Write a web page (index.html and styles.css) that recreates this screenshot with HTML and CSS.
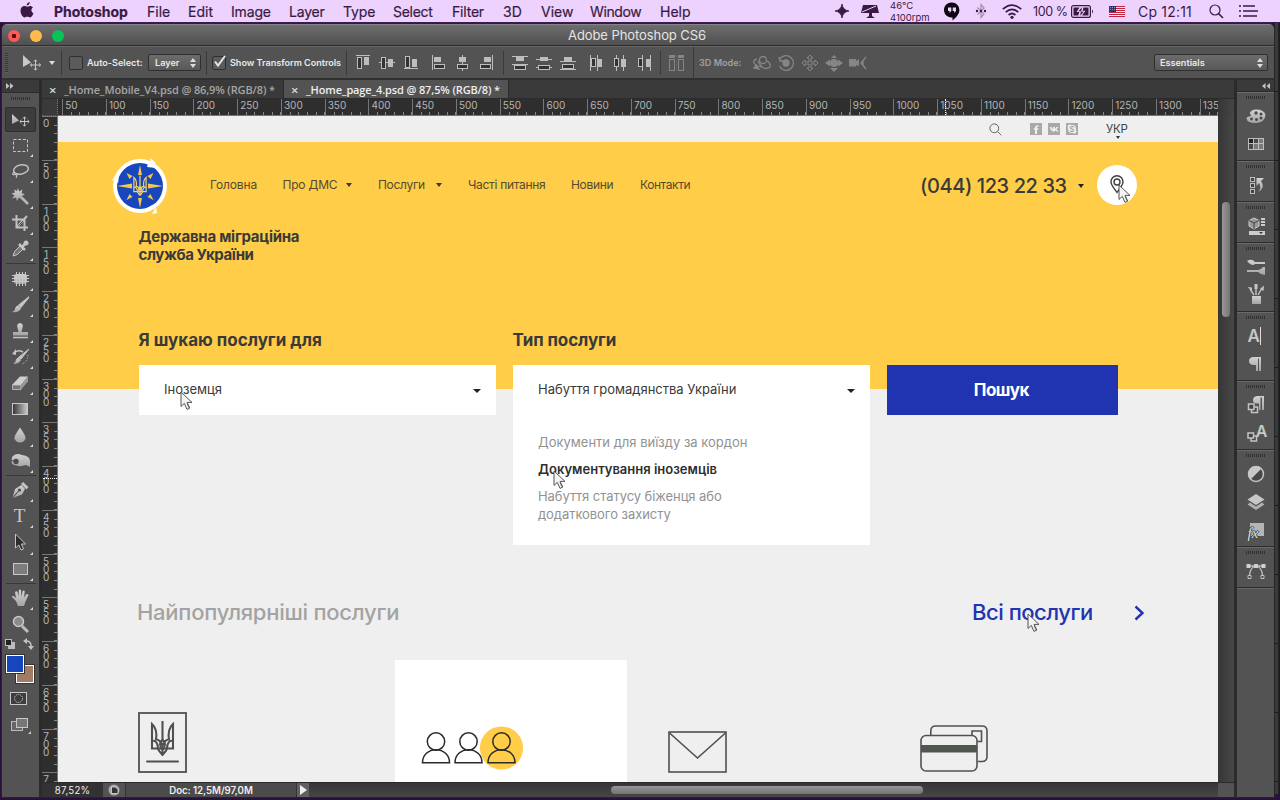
FILE: index.html
```html
<!DOCTYPE html>
<html lang="uk">
<head>
<meta charset="utf-8">
<title>Adobe Photoshop CS6</title>
<link rel="stylesheet" href="styles.css">
</head>
<body>
<svg class="defs" width="0" height="0">
  <defs>
    <linearGradient id="metal" x1="0" y1="0" x2="0" y2="1"><stop offset="0" stop-color="#d2d2d2"/><stop offset="1" stop-color="#a4a4a4"/></linearGradient>
    <linearGradient id="fade" x1="0" y1="0" x2="1" y2="0"><stop offset="0" stop-color="#333"/><stop offset="1" stop-color="#ccc"/></linearGradient>
    <symbol id="cursor" viewBox="0 0 13 20"><path d="M1 1V15.500L4.300 12.400L7 18.400L9.800 17.100L7.100 11.400H12Z" fill="#f4f4f4" stroke="#555" stroke-width="1"/><path d="M7 12.500L9.200 17" stroke="#555" stroke-width=".8"/></symbol>
    <symbol id="trident" viewBox="0 0 24 36"><g fill="none" stroke="currentColor" stroke-width="2.100"><path d="M12 1V21M1.500 4V28.500H22.500V4C18 8 17.500 13 18.500 19.500C14.500 19.500 13 23 12 26C11 23 9.500 19.500 5.500 19.500C6.500 13 6 8 1.500 4Z"/><path d="M1.500 21C5 20 7.500 23 7.500 28.500C8 31 10 32.500 12 35C14 32.500 16 31 16.500 28.500C16.500 23 19 20 22.500 21M12 20C8.500 22 9 26 12 30C15 26 15.500 22 12 20M12 28V34"/></g></symbol>
    <symbol id="person" viewBox="0 0 30 33"><g fill="none" stroke="#2b2b2b" stroke-width="1.500"><circle cx="15" cy="10" r="8.700"/><path d="M1.500 31.200C1.500 23.500 7.500 18.200 15 18.200S28.500 23.500 28.500 31.200Z"/></g></symbol>
  </defs>
</svg>

<header class="menubar">
  <svg class="apple" width="14" height="18" viewBox="0 0 14 18"><path d="M9.800 1C9.900 2.900 8.300 4.600 6.700 4.600C6.500 2.800 8.100 1.200 9.800 1ZM7.100 5.700C7.800 5.700 8.700 4.900 10 4.900C11.200 4.900 12.400 5.600 13 6.500C10.700 7.800 11 11.200 13.500 12.200C12.800 14.200 11.500 16.400 10.100 16.400C9 16.400 8.600 15.700 7.300 15.700C5.900 15.700 5.500 16.400 4.500 16.400C2.700 16.400.500 12.800.500 9.800C.500 6.800 2.400 5 4.300 5C5.500 5 6.400 5.700 7.100 5.700Z" fill="#3a1a45"/></svg>
  <nav class="menus">
    <b class="m-app">Photoshop</b><span class="m-file">File</span><span class="m-edit">Edit</span><span class="m-image">Image</span><span class="m-layer">Layer</span><span class="m-type">Type</span><span class="m-select">Select</span><span class="m-filter">Filter</span><span class="m-3d">3D</span><span class="m-view">View</span><span class="m-window">Window</span><span class="m-help">Help</span>
  </nav>
  <svg class="tray-spark" width="14" height="14" viewBox="0 0 14 14"><path d="M7 0Q7.800 6.200 14 7Q7.800 7.800 7 14Q6.200 7.800 0 7Q6.200 6.200 7 0Z" fill="#3a1a45" stroke="#3a1a45" stroke-width=".8"/></svg>
  <svg class="tray-lamp" width="18" height="15" viewBox="0 0 18 15"><path d="M2 1H16L18 9H11V12L14 14H5L8 12V9H0Z" fill="#3a1a45"/><path d="M1 8L15 2" stroke="#edd2fd" stroke-width="1"/></svg>
  <div class="sensors"><span>46°C</span><span>4100rpm</span></div>
  <svg class="tray-chat" width="16" height="19" viewBox="0 0 16 19"><path d="M8 .500A7.400 7.400 0 0 1 15.400 8C15.400 12 12 15.500 8.500 18.500V15.400A7.500 7.500 0 1 1 8 .500Z" fill="#0c0610"/><path d="M4 5.500H7.300V9L5.500 11V9H4ZM8.700 5.500H12V9L10.200 11V9H8.700Z" fill="#edd2fd"/></svg>
  <svg class="tray-bt" width="12" height="16" viewBox="0 0 12 16"><path d="M2.500 4.500L9 11L6 14.500V1.500L9 5L2.500 11.500" fill="none" stroke="#a68bb3" stroke-width="1.200"/><g fill="#3a1a45"><circle cx="2" cy="8" r="1.200"/><circle cx="6" cy="8" r="1.200"/><circle cx="10" cy="8" r="1.200"/></g></svg>
  <svg class="tray-wifi" width="20" height="15" viewBox="0 0 20 15"><g fill="none" stroke="#3a1a45" stroke-width="1.700"><path d="M.800 5.200Q10-3 19.200 5.200M3.700 8.200Q10 2.600 16.300 8.200M6.600 11Q10 8 13.400 11"/></g><circle cx="10" cy="13.300" r="1.600" fill="#3a1a45"/></svg>
  <span class="tray-pct">100 %</span>
  <svg class="tray-batt" width="23" height="13" viewBox="0 0 23 13"><rect x=".600" y=".600" width="18.800" height="11.800" rx="2" fill="none" stroke="#3a1a45" stroke-width="1.200"/><path d="M2.500 2.500H8.500L5.500 7H8.300L7.300 10.500H2.500ZM17.500 10.500H11L14.500 5.800H11.500L12.500 2.500H17.500Z" fill="#3a1a45"/><path d="M11.300 1.500L7 6.400H9.700L8.700 11.500L13.200 6.600H10.500Z" fill="#3a1a45" stroke="#edd2fd" stroke-width=".5"/><path d="M21 4.500Q23 6.500 21 8.500Z" fill="#3a1a45"/></svg>
  <svg class="tray-flag" width="16" height="11" viewBox="0 0 16 11"><rect width="16" height="11" fill="#f3e9f2"/><path d="M0 .500H16M0 2.500H16M0 4.500H16M0 6.500H16M0 8.500H16M0 10.500H16" stroke="#c0253f"/><rect width="7" height="6" fill="#34336f"/><path d="M1 1.500H7M1 3.500H7" stroke="#aaa6cc" stroke-width=".8" stroke-dasharray="1 1"/></svg>
  <span class="tray-clock">Ср 12:11</span>
  <svg class="tray-search" width="15" height="15" viewBox="0 0 15 15"><circle cx="6" cy="6" r="5" fill="none" stroke="#3a1a45" stroke-width="1.200"/><path d="M9.600 9.600L14 14" stroke="#3a1a45" stroke-width="1.500"/></svg>
  <svg class="tray-list" width="19" height="12" viewBox="0 0 19 12"><path d="M0 1H2M4 1H16M0 6H2M4 6H19M0 11H2M4 11H18" stroke="#3a1a45" stroke-width="1.700"/></svg>
</header>

<div class="desktop">
<div class="window">
  <div class="titlebar">
    <i class="light red"></i><i class="light amber"></i><i class="light green"></i>
    <h1>Adobe Photoshop CS6</h1>
  </div>

  <div class="options">
    <i class="vgrip"></i>
    <svg class="o-move" width="19" height="16" viewBox="0 0 19 16"><path d="M1 0V12L9 7.500Z" fill="#c8c8c8"/><path d="M13.500 5V15M8.500 10H18.500M12 6.500L13.500 4.800L15 6.500M12 13.500L13.500 15.200L15 13.500M10 8.500L8.300 10L10 11.500M17 8.500L18.700 10L17 11.500" stroke="#c8c8c8" fill="none"/></svg>
    <i class="caret-light"></i>
    <i class="osep s1"></i>
    <i class="check"></i><span class="t-auto">Auto-Select:</span>
    <span class="select sel-layer">Layer<svg width="6" height="10" viewBox="0 0 6 10"><path d="M3 0L6 4H0ZM0 6H6L3 10Z" fill="#ddd"/></svg></span>
    <i class="osep s2"></i>
    <span class="check on"><svg width="15" height="14" viewBox="0 0 15 14"><path d="M3 6.500L6 10.500L13 1" fill="none" stroke="#e6e6e6" stroke-width="2"/></svg></span><span class="t-show">Show Transform Controls</span>
    <i class="osep s3"></i>
    <svg class="align" width="340" height="24" viewBox="350 50 340 24" shape-rendering="crispEdges">
      <g fill="#bdbdbd">
        <rect x="356" y="54" width="14" height="1"/><rect x="364" y="56" width="5" height="8"/>
        <rect x="379" y="61" width="16" height="1"/><rect x="388" y="58" width="5" height="8"/>
        <rect x="404" y="67" width="14" height="1"/><rect x="412" y="58" width="5" height="8"/>
        <rect x="432" y="54" width="1" height="15"/><rect x="434" y="56" width="7" height="5"/>
        <rect x="462" y="54" width="1" height="16"/><rect x="459" y="56" width="7" height="5"/>
        <rect x="492" y="54" width="1" height="15"/><rect x="484" y="56" width="7" height="5"/>
        <rect x="512" y="55" width="16" height="1"/><rect x="512" y="63" width="16" height="1"/><rect x="516" y="56" width="8" height="4"/>
        <rect x="536" y="58" width="16" height="1"/><rect x="536" y="66" width="16" height="1"/><rect x="540" y="56" width="8" height="4"/>
        <rect x="560" y="60" width="16" height="1"/><rect x="560" y="68" width="16" height="1"/><rect x="564" y="56" width="8" height="4"/>
        <rect x="590" y="54" width="1" height="16"/><rect x="597" y="54" width="1" height="16"/><rect x="598" y="58" width="4" height="8"/>
        <rect x="616" y="54" width="1" height="16"/><rect x="623" y="54" width="1" height="16"/><rect x="621" y="58" width="5" height="8"/>
        <rect x="642" y="54" width="1" height="16"/><rect x="650" y="54" width="1" height="16"/><rect x="646" y="58" width="4" height="8"/>
      </g>
      <g fill="#333" stroke="#bdbdbd">
        <rect x="357.500" y="56.500" width="4" height="11"/><rect x="381.500" y="56.500" width="4" height="11"/><rect x="405.500" y="55.500" width="4" height="11"/>
        <rect x="434.500" y="63.500" width="10" height="4"/><rect x="457.500" y="63.500" width="10" height="4"/><rect x="480.500" y="63.500" width="10" height="4"/>
        <rect x="514.500" y="64.500" width="11" height="4"/><rect x="538.500" y="64.500" width="11" height="4"/><rect x="562.500" y="63.500" width="11" height="4"/>
        <rect x="591.500" y="57.500" width="4" height="8"/><rect x="614.500" y="57.500" width="4" height="8"/><rect x="638.500" y="57.500" width="4" height="8"/>
      </g>
      <path d="M503.500 50V74M660.500 50V74" stroke="#3a3a3a"/>
      <g fill="#555" stroke="#858585"><rect x="669.500" y="58.500" width="5" height="11"/><rect x="678.500" y="58.500" width="5" height="11"/></g>
      <path d="M669 55.500H675M678 55.500H684" stroke="#858585" stroke-width="3"/><path d="M676.500 54V70" stroke="#666" stroke-dasharray="2 1"/>
    </svg>
    <i class="osep s4"></i>
    <span class="t-3d">3D Mode:</span>
    <svg class="modes" width="116" height="20" viewBox="752 52 116 20">
      <g fill="none" stroke="#868686" stroke-width="1.300">
        <circle cx="763" cy="59" r="3.500"/><path d="M757 58Q753 59 754 62Q756 65 762 66M767 60Q771 62 770 66Q766 69 762 66L759 62Q757 60 760 60"/><path d="M756 64L759 68L754 67Z" fill="#868686"/>
        <circle cx="786" cy="62" r="3" fill="#868686"/><path d="M780 58A7.300 7.300 0 1 1 779.500 65M779 56L780 60H784"/>
        <path d="M809 61V57H807L810 54L813 57H811V61H815V59L818 62L815 65V63H811V67H813L810 70L807 67H809V63H805V65L802 62L805 59V61Z" stroke-width="1"/>
      </g>
      <g fill="#868686"><circle cx="834" cy="62" r="4"/><path d="M834 54L837 57H831ZM834 71L830 67H838ZM825 62L830 58.500V65.500ZM843 62L838 58.500V65.500Z"/><rect x="849" y="58" width="7" height="7.500"/><path d="M856 60L859 58V65L856 64Z"/></g>
      <path d="M866 56L861 62L866 68M863 60V64" fill="none" stroke="#868686" stroke-width="1.300"/>
    </svg>
    <span class="select sel-ess">Essentials<svg width="6" height="10" viewBox="0 0 6 10"><path d="M3 0L6 4H0ZM0 6H6L3 10Z" fill="#ddd"/></svg></span>
  </div>

  <div class="work">
    <aside class="tools">
      <div class="collapse"><svg width="8" height="6" viewBox="0 0 8 6"><path d="M0 0L3.500 3L0 6ZM4 0L7.500 3L4 6Z" fill="#c4c4c4"/></svg></div>
      <i class="grip"></i>
      <div class="tool active"><svg width="24" height="24" viewBox="0 0 24 24"><path d="M4 6V16L11 12.500Z" fill="url(#metal)"/><path d="M16.500 9V18M12 13.500H21M15 10.500L16.500 8.800L18 10.500M15 16.500L16.500 18.200L18 16.500M13.500 12L11.800 13.500L13.500 15M19.500 12L21.200 13.500L19.500 15" stroke="#c4c4c4" fill="none"/></svg></div>
      <div class="tool more"><svg width="24" height="24" viewBox="0 0 24 24"><rect x="5.500" y="6.500" width="14" height="12" fill="none" stroke="#c8c8c8" stroke-dasharray="3 1.700"/></svg></div>
      <div class="tool more"><svg width="24" height="24" viewBox="0 0 24 24"><ellipse cx="13" cy="10.500" rx="7.500" ry="4.500" transform="rotate(-12 13 10.500)" fill="none" stroke="#c0c0c0" stroke-width="1.500"/><path d="M6 13Q3 16 6.500 15.500T8 19" fill="none" stroke="#c0c0c0" stroke-width="1.300"/></svg></div>
      <div class="tool more"><svg width="24" height="24" viewBox="0 0 24 24"><path d="M13 12L20 19" stroke="#b8b8b8" stroke-width="2.500"/><path d="M10 3L11 6.500L14.500 4.500L13.500 8L17 9.500L13.500 11L14 14.500L11 12.500L9 16L8 12.500L4 13.500L6.500 10.500L3.500 8.500L7 7.500L6 4.500L9 6Z" fill="url(#metal)"/></svg></div>
      <div class="tool more"><svg width="24" height="24" viewBox="0 0 24 24"><path d="M4 8.500H16.500V20M8.500 4V16.500H20M9 16L19 5" fill="none" stroke="#c0c0c0" stroke-width="2"/><path d="M10 15L15 10" stroke="#555" stroke-width="1"/></svg></div>
      <div class="tool more"><svg width="24" height="24" viewBox="0 0 24 24"><path d="M5 19L6.500 14.500L12 9L15 12L9.500 17.500Z" fill="#777" stroke="#c4c4c4"/><path d="M11 7L17 13M14 10L18.500 5.500" stroke="#c4c4c4" stroke-width="2.500"/><circle cx="18" cy="6" r="2.500" fill="#c4c4c4"/></svg></div>
      <i class="rule"></i>
      <div class="tool more"><svg width="24" height="24" viewBox="0 0 24 24"><rect x="6" y="7" width="13" height="10" rx="3" fill="url(#metal)"/><path d="M8.500 5V19M11.500 5V19M14.500 5V19M17.500 5V19M4 8.500H21M4 11.500H21M4 14.500H21" stroke="#c8c8c8" stroke-width="1"/></svg></div>
      <div class="tool more"><svg width="24" height="24" viewBox="0 0 24 24"><path d="M21 4L13 14L11 12Z" fill="#c4c4c4" stroke="#c4c4c4" stroke-width="1.300"/><path d="M10.500 12.500L13 15Q12 20 3.500 19Q7 18 7 15.500Q8 12.500 10.500 12.500Z" fill="url(#metal)"/></svg></div>
      <div class="tool more"><svg width="24" height="24" viewBox="0 0 24 24"><path d="M12 4A3 3 0 0 1 14.500 8.500L13.500 13H20V16.500H5V13H10.500L9.500 8.500A3 3 0 0 1 12 4Z" fill="url(#metal)"/><path d="M5 18.500H20" stroke="#c4c4c4" stroke-width="1.500"/></svg></div>
      <div class="tool more"><svg width="24" height="24" viewBox="0 0 24 24"><path d="M21 4L13 14L11 12Z" fill="#c4c4c4" stroke="#c4c4c4"/><path d="M10.500 12L13 15Q11 19 5 19Q8 17 8 14.500Z" fill="url(#metal)"/><path d="M6 8Q10 4 15 7" fill="none" stroke="#c4c4c4" stroke-width="1.500"/><path d="M4 9L8 4V10Z" fill="#c4c4c4"/><path d="M20 10Q20 17 14 19" fill="none" stroke="#c4c4c4" stroke-dasharray="1 1.500"/></svg></div>
      <div class="tool more"><svg width="24" height="24" viewBox="0 0 24 24"><path d="M4 14L12 5.500H20L13 14Z" fill="#cfcfcf"/><path d="M4.500 14H13V18.500H4.500Z" fill="#777" stroke="#c4c4c4" stroke-width=".8"/><path d="M13 14L20 5.500V10.500L13 18.500Z" fill="#999"/></svg></div>
      <div class="tool more"><svg width="24" height="24" viewBox="0 0 24 24"><rect x="4.500" y="6.500" width="15" height="11" fill="url(#fade)" stroke="#c8c8c8"/></svg></div>
      <div class="tool more"><svg width="24" height="24" viewBox="0 0 24 24"><path d="M12 4.500Q18 13 17.500 15.500Q16 19.500 12 19.500T6.500 15.500Q6 13 12 4.500Z" fill="url(#metal)"/></svg></div>
      <div class="tool more"><svg width="24" height="24" viewBox="0 0 24 24"><path d="M4 8Q8 3 14 6Q22 7 22 12V18L18 16Q12 18 9 16.500Q3 16 3.500 12Z" fill="url(#metal)"/><circle cx="8" cy="12.500" r="2.700" fill="#4a4a4a"/><path d="M8 12.500L3 11.500" stroke="#4a4a4a"/></svg></div>
      <i class="rule"></i>
      <div class="tool more"><svg width="24" height="24" viewBox="0 0 24 24"><path d="M4.500 20L7 11L13.500 7L17 11L14 16.500Z" fill="url(#metal)"/><path d="M13 6L15 4L20.500 9L18.500 11.500Z" fill="#c4c4c4"/><path d="M5 19.500L11 12.500" stroke="#444"/><circle cx="11.500" cy="12" r="1.500" fill="#444"/></svg></div>
      <div class="tool more type-tool">T</div>
      <div class="tool more"><svg width="24" height="24" viewBox="0 0 24 24"><path d="M7.500 4V18L10.800 15L13 20L15.500 19L13.300 14H17.500Z" fill="#2c2c2c" stroke="#c4c4c4"/></svg></div>
      <div class="tool more"><svg width="24" height="24" viewBox="0 0 24 24"><rect x="5.500" y="6.500" width="14" height="11" fill="#7d7d7d" stroke="#c8c8c8"/></svg></div>
      <i class="rule"></i>
      <div class="tool more"><svg width="24" height="24" viewBox="0 0 24 24"><path d="M8 15L3.500 10.500Q5 9 8 12L7 6Q8.500 4.500 9.500 6L10.500 10.500L10.800 4Q12 3 13 4L13.200 10.500L14.500 5Q16 4 16.800 5.500L16 11.500L18.500 8Q20 7.500 20.500 9L17.500 15.500L16 20H10Z" fill="url(#metal)"/></svg></div>
      <div class="tool"><svg width="24" height="24" viewBox="0 0 24 24"><path d="M14 14L20 20" stroke="#bdbdbd" stroke-width="3"/><circle cx="10.500" cy="9.500" r="5" fill="#8b8b8b" stroke="#c8c8c8" stroke-width="1.500"/></svg></div>
      <svg class="mini" width="32" height="14" viewBox="0 0 32 14"><rect x="4" y="5" width="7" height="7" fill="#bbb"/><rect x="1.500" y="2.500" width="6" height="6" fill="#222" stroke="#bbb"/><path d="M22 4Q27 4 27 9" fill="none" stroke="#c4c4c4" stroke-width="1.500"/><path d="M19 4L23 1V7ZM24 9H30L27 13Z" fill="#c4c4c4"/></svg>
      <div class="swatches"><i class="bgc"></i><i class="fgc"></i></div>
      <svg class="mask" width="18" height="14" viewBox="0 0 18 14"><rect x=".500" y=".500" width="16" height="12" fill="#3d3d3d" stroke="#c8c8c8"/><circle cx="8.500" cy="6.500" r="4" fill="none" stroke="#ddd" stroke-dasharray="1 1"/></svg>
      <svg class="screen" width="22" height="18" viewBox="0 0 22 18"><rect x="1.500" y="4.500" width="11" height="9" fill="#666" stroke="#bbb"/><rect x="6.500" y="1.500" width="11" height="9" fill="#777" stroke="#c8c8c8"/><path d="M21 14V17H18Z" fill="#ccc"/></svg>
    </aside>

    <section class="document">
      <div class="tabs">
        <div class="tab"><i class="x">×</i><span>_Home_Mobile_V4.psd @ 86,9% (RGB/8) *</span></div>
        <div class="tab current"><i class="x">×</i><span>_Home_page_4.psd @ 87,5% (RGB/8) *</span></div>
      </div>
      <div class="corner"></div>
      <div class="hruler" id="hruler"><i class="hmark"></i></div>
      <div class="vtop"></div>
      <div class="vruler" id="vruler"><i class="vmark"></i></div>

      <main class="canvas">
        <div class="topline">
          <svg class="p-search" width="13" height="13" viewBox="0 0 13 13"><circle cx="5.300" cy="5.300" r="4.400" fill="none" stroke="#666"/><path d="M8.500 8.500L12.300 12.200" stroke="#666"/></svg>
          <div class="social">
            <svg width="12" height="12" viewBox="0 0 12 12"><rect width="12" height="12" fill="#a9a9a9"/><path d="M5 11V6.800H3.800V5.200H5V4Q5.200 1.800 8.500 2.200V3.800Q7 3.600 7 4.500V5.200H8.500L8.300 6.800H7V11Z" fill="#efefef"/></svg>
            <svg width="12" height="12" viewBox="0 0 12 12"><rect width="12" height="12" fill="#a9a9a9"/><path d="M1.500 4H3.300L5 6.500V4H6.800V6L8.500 4H10.500L8.500 6.200L10.700 8.600H8.600L7 7V8.600H5.500Q3 8 1.500 4Z" fill="#efefef"/></svg>
            <svg width="12" height="12" viewBox="0 0 12 12"><rect width="12" height="12" fill="#a9a9a9"/><circle cx="6" cy="6" r="4" fill="#efefef"/><circle cx="3.800" cy="3.800" r="2.200" fill="#efefef"/><circle cx="8.200" cy="8.200" r="2.200" fill="#efefef"/><path d="M8 4.500Q7.500 3.500 6 3.500T4.200 4.700Q4.200 5.700 6 6T7.900 7.300Q7.600 8.500 6 8.500T4 7.500" stroke="#8c8c8c" fill="none" stroke-width="1"/></svg>
          </div>
          <div class="lang">УКР<i></i></div>
        </div>

        <div class="hero">
          <div class="head">
            <svg class="logo" width="60" height="60" viewBox="0 0 60 60">
              <circle cx="30" cy="30" r="27" fill="#fff"/><path d="M2 24L8 16V26ZM40 2L46 7L42 10ZM42 58L46 51L47 57Z" fill="#fff"/><circle cx="30" cy="30" r="23" fill="#1746bd"/><path d="M38 7L46 12L37 11ZM6 23L9 19L8 28ZM37 52L44 48L40 54Z" fill="#fff"/>
              <g fill="#f3c74f"><path d="M30 9L32 19H28ZM30 52L32 42H28ZM7 30L22 27.500V32.500ZM53 30L38 27.500V32.500ZM16.500 17L22.500 20L19.500 23ZM43.500 17L37.500 20L40.500 23ZM16.500 44L22.500 41L19.500 38ZM43.500 44L37.500 41L40.500 38Z"/></g>
              <svg x="23" y="19" width="14" height="21" class="gold"><use href="#trident"/></svg>
            </svg>
            <nav class="site-nav"><a class="n1">Головна</a><a class="n2 has">Про ДМС</a><a class="n3 has">Послуги</a><a class="n4">Часті питання</a><a class="n5">Новини</a><a class="n6">Контакти</a></nav>
            <div class="phone">(044) 123 22 33<i class="tri"></i></div>
            <div class="pin"><svg width="14" height="19" viewBox="0 0 14 19"><path d="M7 17.500C4.500 13.500 1 10.500 1 6.800A6 6 0 0 1 13 6.800C13 10.500 9.500 13.500 7 17.500Z" fill="none" stroke="#3f3f3f" stroke-width="1.400"/><circle cx="7" cy="7" r="3" fill="none" stroke="#3f3f3f" stroke-width="1.400"/></svg><svg class="cur c-pin" width="13" height="20"><use href="#cursor"/></svg></div>
          </div>
          <div class="brand"><span class="b1">Державна міграційна</span><span class="b2">служба України</span></div>

          <form class="search">
            <label class="l1">Я шукаю послуги для</label><label class="l2">Тип послуги</label><span></span>
            <div class="box first"><div class="value">Іноземця<i class="tri"></i></div><svg class="cur c-first" width="13" height="20"><use href="#cursor"/></svg></div>
            <div class="box drop">
              <div class="value"><span class="v2">Набуття громадянства України</span><i class="tri"></i></div>
              <ul>
                <li>Документи для виїзду за кордон</li>
                <li class="hover">Документування іноземців</li>
                <li class="multi">Набуття статусу біженця або<br>додаткового захисту</li>
              </ul>
              <svg class="cur c-drop" width="13" height="20"><use href="#cursor"/></svg>
            </div>
            <div class="button">Пошук</div>
          </form>
        </div>

        <div class="popular">
          <h2>Найпопулярніші послуги</h2>
          <div class="all"><span>Всі послуги</span><svg class="chev" width="11" height="16" viewBox="0 0 11 16"><path d="M1.500 1.500L8.500 8L1.500 14.500" fill="none" stroke="#2233b0" stroke-width="2.400"/></svg><svg class="cur c-all" width="13" height="20"><use href="#cursor"/></svg></div>
        </div>

        <div class="cards">
          <div class="card k1"><svg width="49" height="61" viewBox="0 0 49 61"><rect x="1" y="1" width="47" height="59" fill="none" stroke="#505050" stroke-width="1.800"/><svg x="12" y="8" width="25" height="36" class="dark"><use href="#trident"/></svg><path d="M9 49.500H40" stroke="#505050" stroke-width="2" stroke-linecap="round"/></svg></div>
          <div class="card k2"><svg width="103" height="44" viewBox="0 0 103 44"><circle cx="80.500" cy="22" r="21.600" fill="#ffcd48"/><svg x="0" y="5.500" width="30" height="33"><use href="#person"/></svg><svg x="32.500" y="5.500" width="30" height="33"><use href="#person"/></svg><svg x="65.500" y="5.500" width="30" height="33"><use href="#person"/></svg></svg></div>
          <div class="card k3"><svg width="59" height="42" viewBox="0 0 59 42"><rect x="1" y="1" width="57" height="40" fill="none" stroke="#505050" stroke-width="1.600"/><path d="M1 1.500L29.500 27L58 1.500" fill="none" stroke="#505050" stroke-width="1.600"/></svg></div>
          <div class="card k4"><svg width="68" height="47" viewBox="0 0 68 47"><g fill="none" stroke="#505250" stroke-width="1.600"><path d="M10.800 10V5.800Q10.800 1 15.600 1H62Q67 1 67 5.800V31.500Q67 36.500 62 36.500H57.500M52 10.500V6H61.500V16.500H57.500"/><rect x="1" y="10.500" width="56" height="35.500" rx="5"/></g><rect x="1" y="20" width="56" height="7.500" fill="#505650"/></svg></div>
        </div>
      </main>

      <div class="vscroll"><i></i></div>
      <div class="status">
        <span class="zoom">87,52%</span>
        <span class="sbtn"><svg width="12" height="12" viewBox="0 0 12 12"><circle cx="6" cy="6" r="5.500" fill="#a8a8a8"/><path d="M3.500 3H7.500L10 5.500V9.500H3.500Z" fill="#333" stroke="#ddd" stroke-width=".8"/></svg></span>
        <span class="doc">Doc: 12,5M/97,0M</span>
        <span class="sarrow"><svg width="7" height="10" viewBox="0 0 7 10"><path d="M0 0L7 5L0 10Z" fill="#eee"/></svg></span>
        <span class="hscroll"><i></i></span>
        <span class="resize"></span>
      </div>
    </section>

    <aside class="panels">
      <div class="collapse"><svg width="8" height="6" viewBox="0 0 8 6"><path d="M3.500 0L0 3L3.500 6ZM8 0L4.500 3L8 6Z" fill="#c4c4c4"/></svg></div>
      <div class="group"><i class="grip"></i>
        <svg width="24" height="28" viewBox="0 0 24 28"><path d="M11 7.500Q20 7 21.500 13Q21 20 12 21Q3 21 2.500 16.500Q3 14 6 14.500Q8 13 6 12Q5 9 11 7.500Z" fill="url(#metal)"/><g fill="#4b4b4b"><circle cx="12" cy="11" r="1.700"/><circle cx="17" cy="12" r="1.500"/><circle cx="17" cy="16" r="1.500"/><circle cx="12.500" cy="17.500" r="1.500"/><circle cx="7.500" cy="17" r="1.400"/></g></svg>
        <svg width="24" height="28" viewBox="0 0 24 28"><rect x="4" y="8" width="16" height="12" fill="#bdbdbd"/><path d="M5 9H9V13H5Z" fill="#222"/><path d="M10 9H14V13H10ZM5 14H9V19H5Z" fill="#4a4a4a"/><path d="M15 9H19V13H15ZM10 14H14V19H10ZM15 14H19V19H15Z" fill="#7a7a7a"/></svg>
      </div>
      <div class="group"><i class="grip"></i>
        <svg width="24" height="28" viewBox="0 0 24 28"><g fill="#444" stroke="#bdbdbd"><rect x="6.500" y="6.500" width="4" height="4"/><rect x="6.500" y="12.500" width="4" height="4"/><rect x="6.500" y="18.500" width="4" height="4"/></g><path d="M14 21Q22 17 17 10L20 7H12.500V15L15 12Q18 17 14 21Z" fill="url(#metal)"/></svg>
      </div>
      <div class="group"><i class="grip"></i>
        <svg width="24" height="28" viewBox="0 0 24 28"><path d="M10 6L15 8.500V14L10 17L5 14V8.500Z" fill="#999" stroke="#ccc"/><path d="M5 8.500L10 11L15 8.500M10 11V17" stroke="#444" fill="none"/><path d="M17 7H21M17 10H21M17 13H21" stroke="#ccc" stroke-width="2"/><rect x="5" y="19" width="16" height="4" fill="#ccc"/><path d="M15 20H19L17 22Z" fill="#333"/></svg>
      </div>
      <div class="group"><i class="grip"></i>
        <svg width="24" height="28" viewBox="0 0 24 28"><path d="M3 8Q8 5 11 9H21V11H11Q8 14 3 8ZM21 14V22Q17 22 14 19H3V17H14Q17 17 19 14Z" fill="url(#metal)"/></svg>
        <svg width="24" height="28" viewBox="0 0 24 28"><path d="M8 15H17V23H8Z" fill="url(#metal)"/><path d="M10 14L6 8M12 14V6M14 14L18 7" stroke="#bdbdbd" stroke-width="1.500"/><path d="M3.500 6L8 6.500L8 10ZM10.500 3H13.500V8H10.500ZM16 8L20 4.500L19.500 10Z" fill="#c4c4c4"/></svg>
      </div>
      <div class="group"><i class="grip"></i>
        <div class="glyph letter">A<i></i></div>
        <svg width="24" height="28" viewBox="0 0 24 28"><path d="M17 7H9Q5 7.500 5 11T9 15H12V21H14V8.500H15V21H17Z" fill="url(#metal)"/></svg>
      </div>
      <div class="group"><i class="grip"></i>
        <svg width="24" height="28" viewBox="0 0 24 28"><path d="M20 5H13Q9 5.500 9 9T13 12.500H15V19H16.500V6.500H18V19H20Z" fill="url(#metal)"/><g fill="#444" stroke="#c4c4c4" stroke-width="1.500"><rect x="7.500" y="16" width="6" height="5.500"/><rect x="4.500" y="13" width="5.500" height="5.500"/></g></svg>
        <div class="glyph styled">A<svg width="11" height="10" viewBox="0 0 11 10"><g fill="#444" stroke="#c4c4c4" stroke-width="1.500"><rect x="4" y="4" width="5.500" height="5"/><rect x="1" y="1" width="5.500" height="5"/></g></svg></div>
      </div>
      <div class="group"><i class="grip"></i>
        <svg width="24" height="28" viewBox="0 0 24 28"><circle cx="12" cy="14" r="7.500" fill="#484848" stroke="#c4c4c4" stroke-width="1.500"/><path d="M17.500 8.500A7.700 7.700 0 0 0 6.500 19.500Z" fill="#c8c8c8"/></svg>
        <svg width="24" height="28" viewBox="0 0 24 28"><path d="M12 6L20.500 11.500L12 17L3.500 11.500Z" fill="#c8c8c8"/><path d="M6 14.500L12 18.500L18 14.500L20.500 16.500L12 22L3.500 16.500Z" fill="#b0b0b0"/></svg>
        <div class="glyph fx"><i></i><em>fx</em></div>
      </div>
      <div class="group"><i class="grip"></i>
        <svg width="24" height="28" viewBox="0 0 24 28"><path d="M3 9H21M12 8Q5 12 5.500 20M12 8Q19 12 18.500 20" fill="none" stroke="#bdbdbd" stroke-width="1.300"/><path d="M2.500 7H6.500V11H2.500ZM10 7H14V11H10ZM17.500 7H21.500V11H17.500Z" fill="#d0d0d0"/><path d="M4 18.500H7V21.500H4ZM17 18.500H20V21.500H17Z" fill="#444" stroke="#c4c4c4"/></svg>
      </div>
      <div class="rest"></div>
    </aside>
  </div>
</div>
<div class="behind"></div>
</div>
<script src="rulers.js"></script>
</body>
</html>
```

FILE: styles.css
```css
* { box-sizing: border-box; }
body { margin: 0; width: 1280px; height: 800px; overflow: hidden; background: #28123c; font-family: Inter, "Noto Sans", sans-serif; display: flex; flex-direction: column; }
i { font-style: normal; }
svg { display: block; flex: none; }
.defs { position: absolute; }

/* system menu bar */
.menubar { height: 22px; flex: none; background: #edd2fd; color: #3a1a45; display: flex; align-items: center; font-size: 14px; white-space: nowrap; }
.apple { margin-left: 20px; margin-top: -2px; width: 14px; }
.menus { display: flex; width: 781px; margin-left: 20px; -webkit-text-stroke: .2px #3a1a45; }
.menus > * { flex: none; }
.m-app { width: 93px; }
.m-file { width: 41px; }
.m-edit { width: 43px; }
.m-image { width: 58px; letter-spacing: -.16px; }
.m-layer { width: 54px; letter-spacing: -.2px; }
.m-type { width: 50px; letter-spacing: -.1px; }
.m-select { width: 59px; letter-spacing: -.3px; }
.m-filter { width: 51px; letter-spacing: -.2px; }
.m-3d { width: 38px; }
.m-view { width: 49px; }
.m-window { width: 70px; letter-spacing: -.4px; }
.tray-spark { margin-right: 12px; }
.tray-lamp { margin-right: 11px; }
.sensors { width: 54px; font-size: 9.500px; line-height: 11.500px; display: flex; flex-direction: column; margin-top: 1px; }
.tray-chat { margin-right: 15px; }
.tray-bt { margin-right: 15px; }
.tray-wifi { margin-right: 11px; }
.tray-pct { width: 38px; font-size: 12.500px; letter-spacing: -.4px; }
.tray-batt { margin-right: 15px; }
.tray-flag { margin-right: 13px; }
.tray-clock { width: 71px; letter-spacing: .2px; }
.tray-search { margin-right: 15px; }

/* application window */
.desktop { flex: 1; display: flex; border-top: 1px solid #3c1a55; padding-left: 1px; background: #28123c; }
.window { width: 1274px; height: 775px; flex: none; border: 1px solid #262626; border-radius: 6px 6px 0 0; background: #2b2b2b; overflow: hidden; display: flex; flex-direction: column; }
.behind { width: 4px; height: 771px; background: repeating-linear-gradient(#3a3a3a 0 68px, #1c1c1c 68px 69px); border-right: 1px solid #222; }
.titlebar { height: 22px; flex: none; display: flex; align-items: center; background: linear-gradient(#6d6d6d, #505050); border-top: 1px solid #858585; border-bottom: 1px solid #2e2e2e; }
.light { width: 12px; height: 12px; border-radius: 50%; margin-right: 10px; margin-top: 1px; }
.red { margin-left: 6px; background: radial-gradient(circle, #5a0a10 0 2px, #fb5a57 2.500px); }
.amber { background: #fdbb4d; }
.green { background: #08c458; }
.titlebar h1 { margin: 0 0 0 494px; font-size: 13px; font-weight: 400; color: #e4e4e4; letter-spacing: -.08px; white-space: nowrap; }

.options { height: 33px; flex: none; display: flex; align-items: center; background: #535353; border-top: 1px solid #666; border-bottom: 1px solid #303030; font-size: 9.100px; font-weight: 600; color: #e8e8e8; white-space: nowrap; }
.options > * { flex: none; }
.vgrip { width: 3px; height: 20px; margin-left: 3px; background: repeating-linear-gradient(#333 0 1px, #5d5d5d 1px 2px); }
.o-move { margin-left: 14px; }
.caret-light { border: 3px solid transparent; border-top: 4px solid #ddd; border-bottom: 0; margin-left: 8px; }
.osep { width: 1px; height: 24px; background: #393939; }
.s1 { margin-left: 6px; }
.check { width: 14px; height: 14px; margin-left: 7px; border: 1px solid #2f2f2f; border-radius: 2px; background: #5b5b5b; }
.check svg { margin: -2px 0 0 -1px; }
.t-auto { margin-left: 4px; width: 61px; }
.select { height: 17px; display: flex; align-items: center; justify-content: space-between; border: 1px solid #2f2f2f; border-radius: 2px; background: linear-gradient(#6c6c6c, #585858); padding: 0 4px 0 6px; }
.sel-layer { width: 53px; }
.s2 { margin-left: 5px; }
.on { margin-left: 5px; }
.t-show { margin-left: 4px; width: 116px; letter-spacing: -.04px; }
.align { margin-left: 3px; }
.s4 { margin-left: 3px; height: 31px; background: #3a3a3a; }
.t-3d { margin-left: 5px; width: 53px; color: #a0a0a0; }
.sel-ess { width: 114px; margin-left: 286px; padding-left: 5px; }

.work { flex: 1; display: flex; min-height: 0; }
.tools { width: 37px; background: #535353; display: flex; flex-direction: column; align-items: center; border-top: 1px solid #303030; }
.collapse { width: 100%; height: 13px; background: #3a3a3a; border-bottom: 1px solid #2c2c2c; flex: none; display: flex; align-items: center; padding: 0 4px; }
.grip { display: block; width: 20px; height: 3px; margin: 4px auto 0; flex: none; background: repeating-linear-gradient(90deg, #2f2f2f 0 1px, #555 1px 2px); }
.tool { width: 31px; height: 26.100px; flex: none; display: flex; align-items: center; justify-content: center; position: relative; padding-right: 2px; }
.tool.active { margin-top: 7px; background: #3d3d3d; border: 1px solid #2e2e2e; border-radius: 2px; height: 25px; }
.more::after { content: ""; position: absolute; right: 3px; bottom: 1px; border-left: 3px solid transparent; border-bottom: 3px solid #d8d8d8; }
.type-tool { font: 19px "Liberation Serif", serif; color: #c8c8c8; }
.rule { width: 30px; height: 1px; background: #383838; margin: 1px 0; flex: none; }
.mini { margin-right: 2px; }
.swatches { width: 30px; height: 30px; position: relative; margin: 3px 2px 0 0; flex: none; }
.fgc, .bgc { position: absolute; width: 18px; height: 18px; border: 1px solid #fff; outline: 1px solid #333; }
.fgc { left: 1px; top: 1px; background: #1546bd; }
.bgc { left: 11px; top: 11px; background: #a27d65; }
.mask { margin: 8px 4px 0 0; }
.screen { margin-top: 11px; margin-left: 1px; }

/* document area */
.document { width: 1192px; margin-left: 3px; display: grid; grid-template: 19px 17px 666px 15px / 16px 1160px 16px; border-top: 1px solid #303030; background: #2b2b2b; flex: none; }
.tabs { grid-column: 1 / 4; display: flex; background: #3a3a3a; border-bottom: 1px solid #2c2c2c; font: 600 11px "Open Sans", sans-serif; letter-spacing: -.13px; color: #a5a5a5; white-space: nowrap; }
.tab { width: 242px; display: flex; align-items: center; padding: 1px 0 0 7px; border-right: 1px solid #2b2b2b; }
.tab .x { width: 15px; font-size: 13px; color: #ddd; }
.current { width: 225px; background: #535353; color: #eee; }
.corner { background: #3a3a3a; border-right: 1px dotted #777; border-bottom: 1px dotted #666; }
.hruler, .vruler { background: #2e2e2e; color: #b5b5b5; font-size: 10px; line-height: 10px; overflow: hidden; display: flex; position: relative; }
.hruler { padding-left: 4.200px; border-bottom: 1px solid #777; }
.hruler span { width: 43.760px; flex: none; border-left: 1px solid #777; padding: 1px 0 0 2px; background: repeating-linear-gradient(90deg, transparent 0 7.700px, #888 7.700px 8.700px) 0 100% / 100% 3px no-repeat; }
.vruler { flex-direction: column; border-right: 1px solid #777; }
.vruler span { height: 43.760px; flex: none; border-top: 1px solid #777; padding: 2px 0 0 1px; line-height: 8px; background: repeating-linear-gradient(transparent 0 7.700px, #888 7.700px 8.700px) 100% 0 / 3px 100% no-repeat; }
.vruler b { display: block; width: 6px; font-weight: 400; text-align: center; }
.hmark, .vmark { position: absolute; }
.hmark { left: 887px; top: 0; height: 16px; border-left: 1px dotted #fff; }
.vmark { top: 362px; left: 1px; width: 14px; border-top: 1px dotted #fff; }
.vtop { background: linear-gradient(90deg, #363636, #454545); }
.vscroll { background: linear-gradient(90deg, #363636, #474747); padding: 86px 0 0 4px; }
.vscroll i { display: block; width: 8px; height: 115px; border-radius: 4px; background: linear-gradient(90deg, #979797, #767676); }
.status { grid-column: 1 / 4; display: flex; background: #333; color: #eee; font-size: 9.700px; border-top: 1px solid #2a2a2a; }
.status > span { display: flex; align-items: center; justify-content: center; }
.zoom { width: 61px; background: #323232; letter-spacing: .2px; }
.sbtn { width: 22px; background: #535353; margin-right: 1px; }
.doc { width: 170px; background: #4b4b4b; font-weight: 600; letter-spacing: -.05px; margin-right: 1px; }
.sarrow { width: 12px; background: #606060; }
.status > .hscroll { width: 909px; background: linear-gradient(#363636, #464646); justify-content: flex-start; }
.hscroll i { width: 312px; height: 8px; border-radius: 4px; margin-left: 302px; background: linear-gradient(#969696, #747474); }
.resize { width: 16px; background: #535353; }

/* right icon panels */
.panels { width: 37px; margin-left: 3px; background: #535353; border-top: 1px solid #303030; display: flex; flex-direction: column; flex: none; }
.panels .collapse { justify-content: flex-end; height: 12px; }
.group { flex: none; border-top: 1px solid #6a6a6a; border-bottom: 1px solid #2d2d2d; display: flex; flex-direction: column; align-items: center; padding-bottom: 2px; }
.group .grip { margin: 3px 0; }
.rest { border-top: 1px solid #666; flex: 1; }
.glyph { height: 28px; width: 24px; position: relative; color: #c8c8c8; font-weight: 600; display: flex; align-items: center; }
.letter { font-size: 17px; padding-left: 4px; }
.letter i { width: 1px; height: 18px; background: #ddd; }
.styled { font-size: 16px; justify-content: flex-end; padding-bottom: 4px; }
.styled svg { position: absolute; left: 3px; top: 13px; }
.fx i { position: absolute; left: 6px; top: 7px; width: 14px; height: 13px; background: #b5b5b5; }
.fx em { position: relative; top: 3px; left: 4px; font: italic 15px "Liberation Serif", serif; color: #ddd; text-shadow: -1px 0 #444, 1px 0 #444, 0 -1px #444; }

/* designed page */
.canvas { background: #efefef; overflow: hidden; color: #3a3a38; }
.topline { height: 26px; display: flex; align-items: center; }
.p-search { margin-left: 931px; }
.social { display: flex; gap: 6px; margin-left: 28px; }
.lang { margin-left: 28px; font-size: 11.500px; color: #444; letter-spacing: -.2px; position: relative; }
.lang i { position: absolute; left: 10px; top: 14px; border: 2px solid transparent; border-top: 3px solid #333; border-bottom: 0; }
.hero { height: 247px; background: #ffcd48; }
.head { display: flex; align-items: center; height: 87px; padding: 0 80px 0 51.500px; }
.gold { color: #f3d06a; }
.dark { color: #505050; }
.site-nav { display: flex; margin-left: 40.500px; width: 710px; font-size: 12px; letter-spacing: -.3px; color: #554a2d; white-space: nowrap; margin-top: -2px; }
.site-nav a { flex: none; position: relative; }
.n1 { width: 72.500px; letter-spacing: -.12px; } .n2 { width: 95.500px; letter-spacing: -.2px; } .n3 { width: 90px; } .n4 { width: 103px; } .n5 { width: 69px; } .n6 { letter-spacing: -.42px; }
.has::after { content: ""; position: absolute; right: 26px; top: 6px; border: 3.500px solid transparent; border-top: 4.500px solid #3a3a38; border-bottom: 0; }
.phone { width: 177px; font-size: 20px; font-weight: 500; letter-spacing: -.41px; display: flex; align-items: center; white-space: nowrap; }
.phone .tri { margin-left: 11px; border-width: 3.500px; border-top-width: 4px; border-bottom: 0; }
.pin { width: 40px; height: 40px; border-radius: 50%; background: #fff; display: flex; align-items: center; justify-content: center; position: relative; margin-top: -2px; }
.cur { position: absolute; }
.c-pin { left: 21px; top: 19px; }
.tri { border: 4px solid transparent; border-top: 4.500px solid #222; border-bottom: 0; }
.brand { margin: -1px 0 0 80.500px; font-size: 15px; line-height: 18.300px; font-weight: 700; display: flex; flex-direction: column; }
.b1 { letter-spacing: -.26px; } .b2 { letter-spacing: -.42px; }
.search { margin: 65px 0 0 80.500px; display: grid; grid-template-columns: 357.500px 357.500px 231.500px; column-gap: 16.500px; align-items: start; }
.search label { font-size: 17px; font-weight: 700; line-height: 20px; height: 35px; white-space: nowrap; }
.search .l2 { letter-spacing: -.1px; }
.box { background: #fff; position: relative; font-size: 13px; }
.value { height: 50px; display: flex; align-items: center; justify-content: space-between; padding: 0 15px 2px 25.500px; }
.value .tri { margin-top: 4px; }
.drop { height: 180px; }
.drop ul { margin: 17px 0 0; padding: 0 0 0 25.500px; list-style: none; color: #929292; white-space: nowrap; }
.drop li { height: 27px; line-height: 20px; }
.drop .hover { color: #2e2e2e; font-weight: 600; }
.drop .multi { line-height: 18px; padding-top: 1px; letter-spacing: -.06px; }
.c-first { left: 41px; top: 26px; }
.c-drop { left: 40px; top: 105px; }
.button { height: 50px; background: #2033b1; color: #fff; font-size: 17px; font-weight: 700; letter-spacing: -.5px; display: flex; align-items: center; justify-content: center; padding-right: 2px; }
.popular { display: flex; justify-content: space-between; align-items: center; margin: 208px 73px 0 79px; height: 30px; white-space: nowrap; }
.popular h2 { margin: 0; font-size: 22px; font-weight: 500; letter-spacing: -.26px; color: #a3a3a3; }
.all { display: flex; align-items: center; position: relative; font-size: 22px; font-weight: 500; letter-spacing: -.48px; color: #2233b0; }
.all span { width: 162px; }
.chev { margin-top: 2px; }
.c-all { left: 55px; top: 14px; }
.cards { display: flex; height: 122px; margin: 33px 0 0 80px; align-items: flex-end; }
.card { flex: none; padding-bottom: 9px; }
.k1 { width: 257px; }
.k2 { width: 232px; height: 122px; background: #fff; padding: 66px 0 0 25.500px; }
.k3 { width: 252px; margin-left: 41px; }
.k4 { padding-bottom: 10px; }
```

FILE: rulers.js
```js
// Fills both rulers with one segment for every 50 document units.
const horizontal = document.getElementById("hruler");
for (let n = 50; n <= 1350; n += 50) {
  const segment = document.createElement("span");
  segment.textContent = n;
  horizontal.append(segment);
}
const vertical = document.getElementById("vruler");
for (let n = 0; n <= 750; n += 50) {
  const segment = document.createElement("span");
  for (const digit of String(n)) {
    const line = document.createElement("b");
    line.textContent = digit;
    segment.append(line);
  }
  vertical.append(segment);
}
```
